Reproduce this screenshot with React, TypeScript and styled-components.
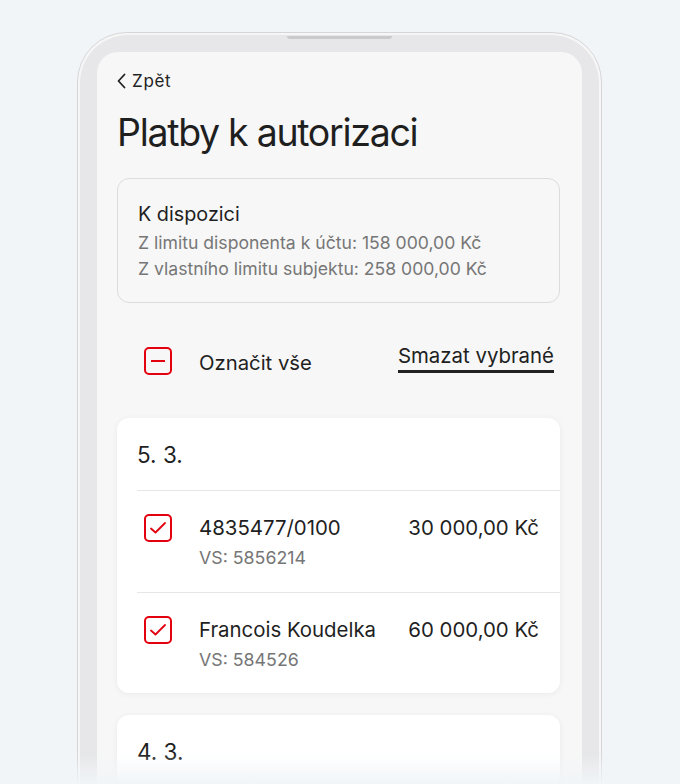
import styled, { createGlobalStyle } from "styled-components";

const GlobalStyle = createGlobalStyle`
	html, body {
		margin: 0;
		padding: 0;
		background: #f1f5f8;
		font-family: Inter, "Noto Sans", "Liberation Sans", sans-serif;
		color: #1f1f1f;
	}
`;

const Page = styled.div`
	height: 784px;
	overflow: hidden;
	padding-top: 32px;
	box-sizing: border-box;
	position: relative;
`;

const Phone = styled.div`
	width: 525px;
	margin-left: 77px;
	height: 900px;
	box-sizing: border-box;
	border: 1px solid #d6d6d9;
	border-radius: 50px;
	padding: 2px;
	background: #f6f6f7;
`;

const Frame = styled.div`
	height: 100%;
	border-radius: 48px;
	background: #e7e7e9;
	padding: 0 17px;
	box-sizing: border-box;
	display: flex;
	flex-direction: column;
`;

const Notch = styled.div`
	width: 105px;
	height: 3px;
	margin: 1px auto 13px;
	background: #cacacd;
	border-radius: 0 0 3px 3px;
`;

const Screen = styled.div`
	flex: 1;
	background: #f7f7f7;
	border-radius: 21px 21px 0 0;
	padding: 18px 22px 0 20px;
`;

const Back = styled.div`
	display: flex;
	align-items: center;
	gap: 6px;
	height: 22px;
	font-size: 17px;
	letter-spacing: 0.7px;
	color: #222;
`;

const Title = styled.h1`
	margin: 19px 0 23px;
	font-size: 37.5px;
	line-height: 44px;
	font-weight: 400;
	color: #1f1f1f;
	letter-spacing: -1.3px;
`;

const InfoBox = styled.div`
	border: 1px solid #dcdcdc;
	border-radius: 12px;
	padding: 23px 20px 20px;
`;

const InfoTitle = styled.div`
	font-size: 19.8px;
	line-height: 24px;
	margin-bottom: 4px;
`;

const InfoLine = styled.div`
	font-size: 17.6px;
	line-height: 26px;
	color: #767676;
`;

const SelectRow = styled.div`
	display: flex;
	align-items: center;
	height: 48px;
	margin: 34px 0 33px;
	padding: 0 6px 0 27px;
`;

const SelectLabel = styled.span`
	font-size: 20.3px;
	margin-left: 27px;
	flex: 1;
	padding-top: 2px;
`;

const LinkButton = styled.span`
	font-size: 20.4px;
	line-height: 24px;
	padding-bottom: 2px;
	border-bottom: 3px solid #222;
	margin-top: -6px;
`;

const Box = styled.div`
	width: 28px;
	height: 28px;
	box-sizing: border-box;
	border: 2px solid #e3000f;
	border-radius: 5px;
	display: flex;
	align-items: center;
	justify-content: center;
	flex-shrink: 0;
`;

const Card = styled.div`
	background: #fff;
	border-radius: 12px;
	box-shadow: 0 1px 6px rgba(0, 0, 0, 0.06);
	margin-bottom: 22px;
`;

const CardDate = styled.div`
	font-size: 22.5px;
	line-height: 34px;
	padding: 20px 20px 18px 0;
	border-bottom: 1px solid #e6e6e6;
	margin-left: 20px;
`;

const Payment = styled.div<{ $last?: boolean }>`
	display: flex;
	align-items: flex-start;
	margin-left: 20px;
	padding: 23px 21px ${(p) => (p.$last ? "22px" : "23px")} 7px;
	border-bottom: ${(p) => (p.$last ? "none" : "1px solid #e6e6e6")};
`;

const PaymentBody = styled.div`
	flex: 1;
	margin-left: 27px;
	padding-top: 1px;
`;

const PaymentTop = styled.div`
	display: flex;
	justify-content: space-between;
	font-size: 20.4px;
	line-height: 26px;
`;

const Vs = styled.div`
	font-size: 17.8px;
	line-height: 22px;
	color: #767676;
	margin-top: 6px;
`;

const Fade = styled.div`
	position: absolute;
	left: 0;
	right: 0;
	bottom: 0;
	height: 30px;
	background: linear-gradient(rgba(241, 245, 248, 0), rgba(241, 245, 248, 0.97));
	pointer-events: none;
`;

function Check() {
	return (
		<Box>
			<svg width="18" height="14" viewBox="0 0 18 14" fill="none">
				<path d="M2 7.5 L6.5 11.5 L16 2" stroke="#e3000f" strokeWidth="1.8" strokeLinecap="round" strokeLinejoin="round" />
			</svg>
		</Box>
	);
}

function Minus() {
	return (
		<Box>
			<svg width="16" height="4" viewBox="0 0 16 4" fill="none">
				<path d="M1 2 H15" stroke="#e3000f" strokeWidth="2" />
			</svg>
		</Box>
	);
}

const payments = [
	{ name: "4835477/0100", vs: "5856214", amount: "30 000,00 Kč" },
	{ name: "Francois Koudelka", vs: "584526", amount: "60 000,00 Kč" },
];

export default function App() {
	return (
		<Page>
			<GlobalStyle />
			<Phone>
				<Frame>
					<Notch />
					<Screen>
						<Back>
							<svg width="9" height="16" viewBox="0 0 9 16" fill="none">
								<path d="M7.5 1.5 L1.5 8 L7.5 14.5" stroke="#222" strokeWidth="1.8" strokeLinecap="round" strokeLinejoin="round" />
							</svg>
							Zpět
						</Back>
						<Title>Platby k autorizaci</Title>
						<InfoBox>
							<InfoTitle>K dispozici</InfoTitle>
							<InfoLine>Z limitu disponenta k účtu: 158 000,00 Kč</InfoLine>
							<InfoLine>Z vlastního limitu subjektu: 258 000,00 Kč</InfoLine>
						</InfoBox>
						<SelectRow>
							<Minus />
							<SelectLabel>Označit vše</SelectLabel>
							<LinkButton>Smazat vybrané</LinkButton>
						</SelectRow>
						<Card>
							<CardDate>5. 3.</CardDate>
							{payments.map((p, i) => (
								<Payment key={p.name} $last={i === payments.length - 1}>
									<Check />
									<PaymentBody>
										<PaymentTop>
											<span>{p.name}</span>
											<span>{p.amount}</span>
										</PaymentTop>
										<Vs>VS: {p.vs}</Vs>
									</PaymentBody>
								</Payment>
							))}
						</Card>
						<Card>
							<CardDate>4. 3.</CardDate>
						</Card>
					</Screen>
				</Frame>
			</Phone>
			<Fade />
		</Page>
	);
}
